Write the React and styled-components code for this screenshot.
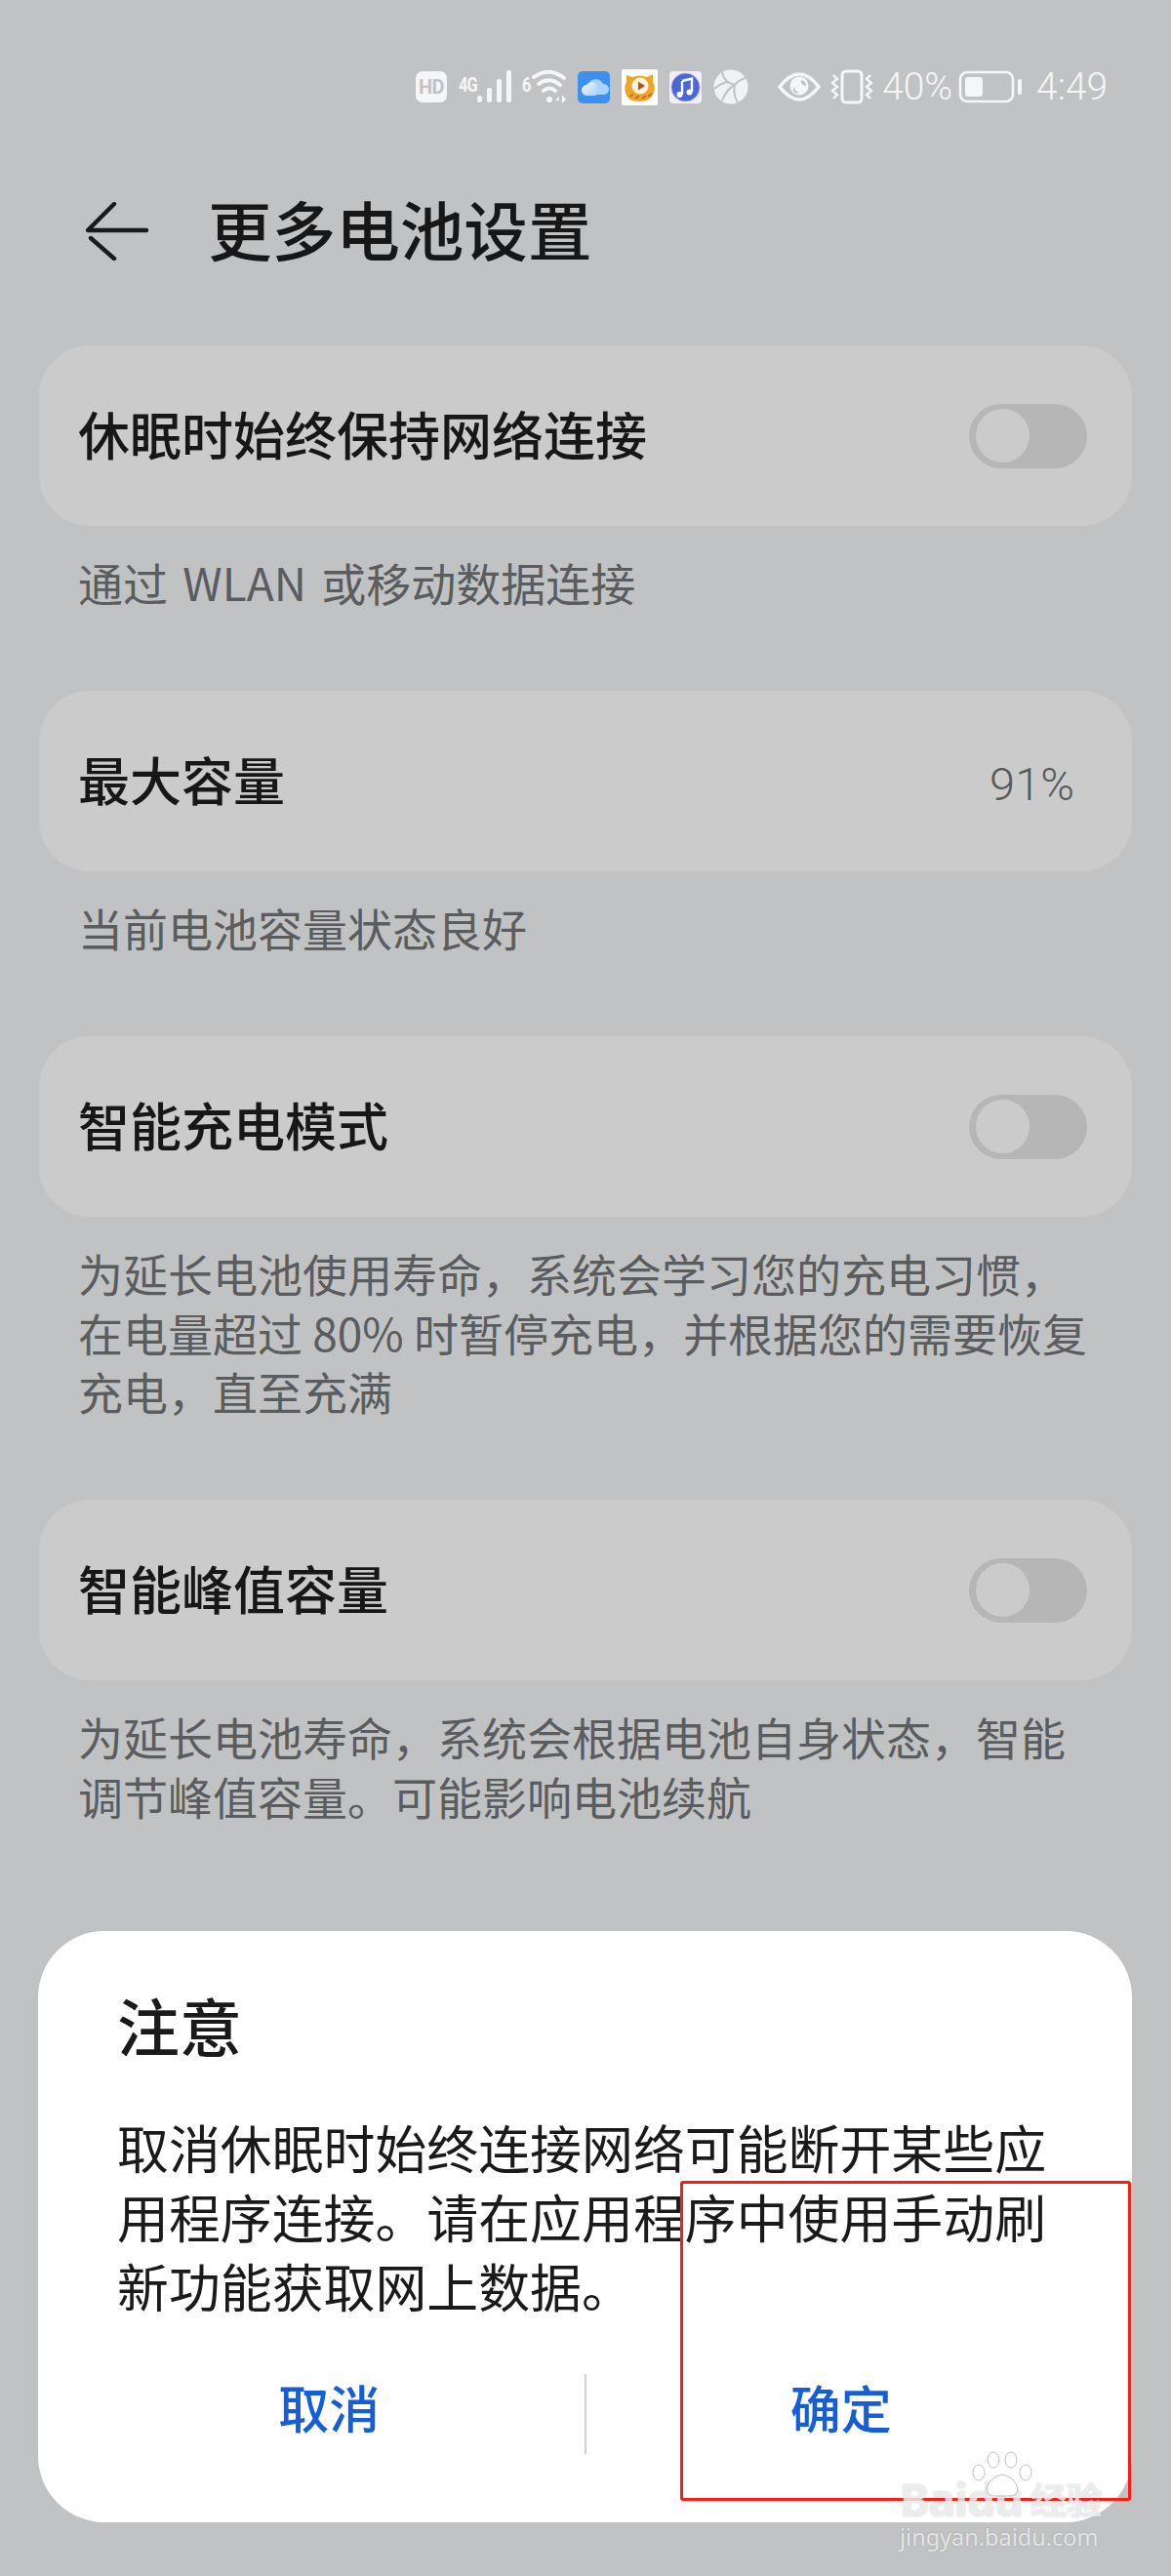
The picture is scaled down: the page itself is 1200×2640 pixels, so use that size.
import React from 'react';
import styled, { createGlobalStyle } from 'styled-components';

const GlobalStyle = createGlobalStyle`
  html, body {
    margin: 0;
    padding: 0;
    background: #c1c2c4;
  }
  body {
    font-family: "Noto Sans CJK SC", "Noto Sans", sans-serif;
  }
`;

const Page = styled.div`
  position: relative;
  width: 1200px;
  height: 2640px;
  overflow: hidden;
  background: #c1c2c4;
`;

const StatusBar = styled.div`
  display: flex;
  align-items: center;
  height: 38px;
  padding: 70px 65px 79px 426px;
  color: #f5f6f7;
`;

const Slot = styled.div`
  display: flex;
  flex: none;
  align-items: center;
  margin-left: ${props => props.$ml || 0}px;
`;

const HdBadge = styled.div`
  width: 32px;
  height: 32px;
  border-radius: 7px;
  background: #f5f6f7;
  color: #c1c2c4;
  font-family: "Roboto", sans-serif;
  font-size: 20px;
  font-weight: 700;
  line-height: 32px;
  text-align: center;
  letter-spacing: -0.5px;
`;

const NetLabel = styled.span`
  align-self: flex-start;
  width: ${props => props.$width}px;
  margin-top: -5px;
  font-family: "Roboto", sans-serif;
  font-size: 20px;
  font-weight: 700;
  line-height: 20px;
  letter-spacing: -1px;
  transform: scaleX(0.82);
  transform-origin: left center;
`;

const StatusText = styled.span`
  font-family: "Roboto", sans-serif;
  font-size: 39px;
  font-weight: 300;
  line-height: 38px;
`;

const Header = styled.header`
  display: flex;
  align-items: center;
  height: 100px;
  margin-bottom: 67px;
  padding-left: 88px;
  gap: 61px;
`;

const PageTitle = styled.h1`
  margin: 0 0 6px;
  color: #171717;
  font-size: 65.6px;
  font-weight: 500;
  line-height: 100px;
`;

const Content = styled.main`
  display: flex;
  flex-direction: column;
  padding: 0 40px;
`;

const Section = styled.section`
  margin-bottom: 78.5px;
`;

const Card = styled.div`
  display: flex;
  align-items: center;
  justify-content: space-between;
  height: 185px;
  padding: 0 46px 0 40px;
  border-radius: 52px;
  background: #cbcbcb;
`;

const CardLabel = styled.span`
  margin-bottom: 5px;
  color: #171717;
  font-size: 53px;
  font-weight: 500;
  line-height: 70px;
`;

const CardValue = styled.span`
  margin: 6px 13px 0 0;
  color: #58595a;
  font-family: "Roboto", sans-serif;
  font-size: 47px;
  font-weight: 300;
  line-height: 60px;
`;

const Toggle = styled.div`
  flex: none;
  width: 121px;
  height: 66px;
  padding: 5px 7px;
  box-sizing: border-box;
  border-radius: 33px;
  background: #b6b6b6;
`;

const Knob = styled.div`
  width: 55px;
  height: 55px;
  border-radius: 50%;
  background: #cbcbcb;
`;

const Hint = styled.p`
  margin: 27px 0 3px;
  padding: 0 40px;
  color: #5b5c5e;
  font-size: 46px;
  line-height: 60.5px;
  word-spacing: ${props => props.$wordGap || 0}px;
`;

const Dialog = styled.div`
  position: absolute;
  left: 39px;
  top: 1979px;
  width: 1121px;
  height: 606px;
  border-radius: 68px;
  background: #ffffff;
`;

const DialogTitle = styled.h2`
  margin: 0;
  padding: 45px 81px 0;
  color: #1a1a1a;
  font-size: 64px;
  font-weight: 500;
  line-height: 100px;
`;

const DialogBody = styled.p`
  margin: 41px 0 0;
  padding: 0 81px;
  color: #1a1a1a;
  font-size: 52.9px;
  line-height: 71px;
`;

const DialogActions = styled.div`
  display: flex;
  align-items: center;
  margin-top: 54px;
  padding: 0 37px;
`;

const ActionButton = styled.button`
  flex: 1;
  padding: 0 0 14px;
  border: 0;
  background: none;
  color: #155ed8;
  font-family: inherit;
  font-size: 52px;
  font-weight: 500;
  line-height: 70px;
`;

const ActionDivider = styled.div`
  flex: none;
  width: 2px;
  height: 82px;
  background: #cfcfcf;
`;

const Highlight = styled.div`
  position: absolute;
  left: 697px;
  top: 2235px;
  width: 456px;
  height: 322px;
  border: 3px solid #fb1c12;
  border-radius: 3px;
`;

const Watermark = styled.div`
  position: absolute;
  left: 922px;
  top: 2538px;
  display: flex;
  flex-direction: column;
  width: 220px;
  color: rgba(255, 255, 255, 0.72);
  text-shadow: 0 0 1.5px rgba(120, 120, 120, 0.5);
`;

const Paw = styled.svg`
  position: absolute;
  left: 73px;
  top: -26px;
`;

const MarkBrand = styled.div`
  display: flex;
  align-items: center;
  gap: 8px;
  height: 46px;
  white-space: nowrap;
`;

const MarkLatin = styled.span`
  font-family: "Noto Sans", sans-serif;
  font-size: 46px;
  font-weight: 700;
  line-height: 46px;
  letter-spacing: -1px;
`;

const MarkCn = styled.span`
  font-family: "Noto Sans CJK SC", sans-serif;
  font-size: 37px;
  font-weight: 700;
  line-height: 46px;
`;

const MarkUrl = styled.div`
  font-family: "Noto Sans", sans-serif;
  font-size: 23.5px;
  line-height: 32px;
  white-space: nowrap;
`;

const sections = [
  { label: '休眠时始终保持网络连接', toggle: true, wordGap: 5, hint: ['通过 WLAN 或移动数据连接'] },
  { label: '最大容量', value: '91%', hint: ['当前电池容量状态良好'] },
  {
    label: '智能充电模式',
    toggle: true,
    hint: ['为延长电池使用寿命，系统会学习您的充电习惯，', '在电量超过 80% 时暂停充电，并根据您的需要恢复', '充电，直至充满'],
  },
  {
    label: '智能峰值容量',
    toggle: true,
    hint: ['为延长电池寿命，系统会根据电池自身状态，智能', '调节峰值容量。可能影响电池续航'],
  },
];

const SignalIcon = () => (
  <svg width="36" height="34" viewBox="0 0 36 34" fill="#f5f6f7">
    <rect x="0" y="26" width="5" height="7" rx="2.5" />
    <rect x="10" y="18" width="5" height="15" rx="2" />
    <rect x="20" y="9" width="5" height="24" rx="2" />
    <rect x="30" y="0" width="5" height="33" rx="2" />
  </svg>
);

const WifiIcon = () => (
  <svg width="38" height="36" viewBox="0 0 38 36" fill="none" stroke="#f5f6f7" strokeWidth="4" strokeLinecap="round">
    <path d="M2 8 Q18 -3 33 9" />
    <path d="M7 15 Q18 7 29 16" />
    <path d="M12 22 Q18 17 24 22" />
    <circle cx="18" cy="31" r="3" fill="#f5f6f7" stroke="none" />
    <path d="M28 28 L24 32 H28 Z M31 26 V35 L35 31 Z" fill="#f5f6f7" stroke="none" />
  </svg>
);

const CloudIcon = () => (
  <svg width="33" height="33" viewBox="0 0 33 33">
    <defs>
      <linearGradient id="cloudFront" x1="0" y1="0" x2="1" y2="1">
        <stop offset="0" stopColor="#f4f9ff" />
        <stop offset="1" stopColor="#a8d2fb" />
      </linearGradient>
    </defs>
    <rect width="33" height="33" rx="5" fill="#3d8ff0" />
    <path d="M11 14 a8 8 0 0 1 15 -1 a5.5 5.5 0 0 1 1 11 H16 Z" fill="#a9d3fa" />
    <path d="M10 25 a5.5 5.5 0 0 1 -1 -11 a6 6 0 0 1 11 3 L19 25 Z" fill="url(#cloudFront)" />
  </svg>
);

const CatIcon = () => (
  <svg width="37" height="37" viewBox="0 0 37 37">
    <rect width="37" height="37" rx="2" fill="#ffffff" />
    <path d="M5 6 L11 8 Q18 5 26 8 L32 5 L32 13 Q35 18 33 24 Q30 33 18 33 Q6 33 4 24 Q2 18 5 13 Z" fill="#f2a428" />
    <circle cx="19" cy="17" r="8.5" fill="#fff4dc" />
    <path d="M17 12.5 L24 17 L17 21.5 Z" fill="#a8552a" />
    <path d="M8 28 L12 26 M14 30 L18 27 M21 30 L25 27 M27 28 L31 25" stroke="#b96a1e" strokeWidth="1.6" />
  </svg>
);

const MusicIcon = () => (
  <svg width="33" height="33" viewBox="0 0 33 33">
    <rect width="33" height="33" rx="4" fill="#f0eff6" />
    <circle cx="16.5" cy="16.5" r="14.5" fill="#4a68d4" stroke="#c7a4e8" strokeWidth="0.8" />
    <path d="M13 10 L23 7.5 V21" fill="none" stroke="#ffffff" strokeWidth="2.4" />
    <path d="M13 10 V24" fill="none" stroke="#ffffff" strokeWidth="2.4" />
    <circle cx="10.5" cy="24" r="3" fill="#ffffff" />
    <circle cx="20.5" cy="21.5" r="3" fill="#ffffff" />
  </svg>
);

const GlobeIcon = () => (
  <svg width="36" height="36" viewBox="0 0 36 36">
    <circle cx="18" cy="18" r="17.5" fill="#f1f2f3" />
    <path d="M9 3 Q11 14 22 16 M33 9 Q26 11 22 16 Q20 26 25 34 M1 20 Q8 14 15 13 M22 16 Q14 20 9 32" fill="none" stroke="#c1c2c4" strokeWidth="2" />
  </svg>
);

const EyeIcon = () => (
  <svg width="44" height="30" viewBox="0 0 44 30">
    <path d="M2 15 Q12 2 22 2 Q32 2 42 15 Q32 28 22 28 Q12 28 2 15 Z" fill="none" stroke="#f5f6f7" strokeWidth="3.6" />
    <circle cx="22" cy="14" r="9.5" fill="#f5f6f7" />
    <path d="M24 8 a6 6 0 0 1 5 6 a5 5 0 0 1 -5 -6 Z M17 15 q1 5 5 6 q-6 2 -6 -4 Z" fill="#c1c2c4" />
  </svg>
);

const VibrateIcon = () => (
  <svg width="44" height="36" viewBox="0 0 44 36" fill="none" stroke="#f5f6f7">
    <rect x="12" y="2" width="20" height="32" rx="4" strokeWidth="3" />
    <path d="M3 6 L7 10 L2 14 L7 18 L2 22 L7 26 L3 30" strokeWidth="2.4" />
    <path d="M41 6 L37 10 L42 14 L37 18 L42 22 L37 26 L41 30" strokeWidth="2.4" />
  </svg>
);

const BatteryIcon = () => (
  <svg width="66" height="34" viewBox="0 0 66 34">
    <rect x="2" y="2" width="54" height="30" rx="7" fill="none" stroke="#f5f6f7" strokeWidth="2.6" />
    <rect x="7" y="7" width="18" height="20" rx="3" fill="#f5f6f7" />
    <rect x="61" y="9" width="4" height="16" rx="2" fill="#f5f6f7" />
  </svg>
);

const BackArrow = () => (
  <svg width="64" height="60" viewBox="0 0 64 60" fill="none" stroke="#1a1a1a" strokeWidth="4.4" strokeLinecap="round" strokeLinejoin="round">
    <path d="M29 2 L2 29 H62" />
    <path d="M5 37 L29 58" />
  </svg>
);

const PawIcon = () => (
  <Paw width="64" height="48" viewBox="0 0 64 48" fill="rgba(255,255,255,0.72)" stroke="rgba(130,130,130,0.5)" strokeWidth="1">
    <ellipse cx="8" cy="22" rx="6" ry="8" />
    <ellipse cx="23" cy="9" rx="6" ry="8" />
    <ellipse cx="41" cy="9" rx="6" ry="8" />
    <ellipse cx="56" cy="22" rx="6" ry="8" />
    <path d="M32 24 Q44 26 48 38 Q48 47 38 46 H26 Q16 47 16 38 Q20 26 32 24 Z" />
  </Paw>
);

const App = () => {
  return (
    <Page>
      <GlobalStyle />
      <StatusBar>
        <Slot><HdBadge>HD</HdBadge></Slot>
        <Slot $ml={12}><NetLabel $width={20}>4G</NetLabel></Slot>
        <Slot $ml={-1}><SignalIcon /></Slot>
        <Slot $ml={10}><NetLabel $width={9}>6</NetLabel></Slot>
        <Slot $ml={1}><WifiIcon /></Slot>
        <Slot $ml={9}><CloudIcon /></Slot>
        <Slot $ml={12}><CatIcon /></Slot>
        <Slot $ml={12}><MusicIcon /></Slot>
        <Slot $ml={12}><GlobeIcon /></Slot>
        <Slot $ml={30}><EyeIcon /></Slot>
        <Slot $ml={10}><VibrateIcon /></Slot>
        <Slot $ml={9}><StatusText>40%</StatusText></Slot>
        <Slot $ml={6}><BatteryIcon /></Slot>
        <Slot $ml={14}><StatusText>4:49</StatusText></Slot>
      </StatusBar>

      <Header>
        <BackArrow />
        <PageTitle>更多电池设置</PageTitle>
      </Header>

      <Content>
        {sections.map(section => (
          <Section key={section.label}>
            <Card>
              <CardLabel>{section.label}</CardLabel>
              {section.toggle && <Toggle><Knob /></Toggle>}
              {section.value && <CardValue>{section.value}</CardValue>}
            </Card>
            <Hint $wordGap={section.wordGap}>
              {section.hint.map((line, i) => (
                <React.Fragment key={line}>
                  {i > 0 && <br />}
                  {line}
                </React.Fragment>
              ))}
            </Hint>
          </Section>
        ))}
      </Content>

      <Dialog>
        <DialogTitle>注意</DialogTitle>
        <DialogBody>
          取消休眠时始终连接网络可能断开某些应<br />
          用程序连接。请在应用程序中使用手动刷<br />
          新功能获取网上数据。
        </DialogBody>
        <DialogActions>
          <ActionButton>取消</ActionButton>
          <ActionDivider />
          <ActionButton>确定</ActionButton>
        </DialogActions>
      </Dialog>

      <Highlight />

      <Watermark>
        <PawIcon />
        <MarkBrand>
          <MarkLatin>Baidu</MarkLatin>
          <MarkCn>经验</MarkCn>
        </MarkBrand>
        <MarkUrl>jingyan.baidu.com</MarkUrl>
      </Watermark>
    </Page>
  );
};

export default App;
